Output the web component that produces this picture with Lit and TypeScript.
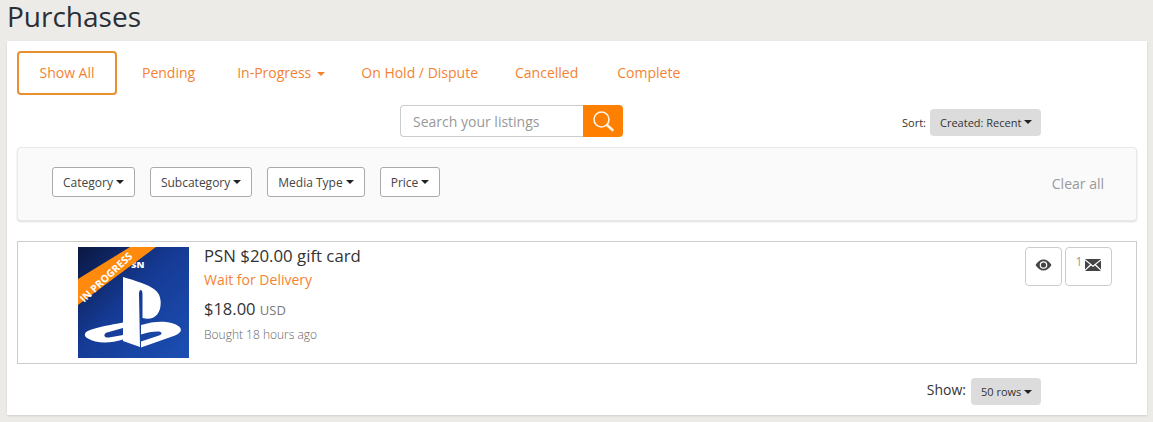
import { LitElement, html, css } from "lit";
import { customElement } from "lit/decorators.js";

const caret = html`<span class="caret"></span>`;

@customElement("app-root")
export class AppRoot extends LitElement {
  static styles = css`
    :host { display: block; height: 422px; background: #ecebe8; font-family: "Open Sans", sans-serif; color: #333; box-sizing: border-box; padding: 0 6px 0 7px; }
    h1 { margin: 0; height: 41px; font-size: 28px; font-weight: 400; line-height: 33px; color: #2a2f36; }
    .card { background: #fff; height: 374px; box-sizing: border-box; padding: 10px; box-shadow: 0 1px 2px rgba(0,0,0,.12); }
    .tabs { display: flex; align-items: center; height: 44px; font-size: 14px; color: #f58233; }
    .tab { white-space: nowrap; margin-top: -2px; }
    .tab.active { box-sizing: border-box; width: 100px; height: 44px; margin-top: 0; border: 2px solid #e88f30; border-radius: 4px; display: flex; align-items: center; justify-content: center; margin-right: 25px; padding-bottom: 2px; }
    .tab.p { margin-right: 42px; }
    .tab.ip { margin-right: 36px; }
    .tab.oh { margin-right: 37px; }
    .tab.cn { margin-right: 39px; }
    .caret { display: inline-block; width: 0; height: 0; margin-left: 3px; vertical-align: middle; border-top: 4px solid #222; border-left: 4px solid transparent; border-right: 4px solid transparent; }
    .tabs .caret { margin-left: 6px; border-top-color: currentColor; }
    .row { display: flex; align-items: center; height: 32px; margin-top: 10px; padding-left: 383px; padding-right: 96px; }
    .search { display: flex; width: 223px; height: 32px; }
    .search .input { flex: 1; box-sizing: border-box; border: 1px solid #ccc; border-right: 0; border-radius: 4px 0 0 4px; padding-left: 12px; font-size: 14px; line-height: 31px; color: #999; }
    .search .go { width: 40px; background: #ff8000; border-radius: 0 4px 4px 0; display: flex; align-items: center; justify-content: center; }
    .sort { margin-left: auto; display: flex; align-items: center; gap: 4px; font-size: 11px; color: #333; padding-top: 2px; }
    .grey { display: inline-flex; align-items: center; box-sizing: border-box; padding-left: 10px; background: #dcdcdc; border-radius: 4px; font-size: 11px; color: #333; height: 27px; white-space: nowrap; }
    .grey.s { width: 111px; }
    .grey.r { width: 70px; }
    .panel { box-sizing: border-box; height: 74px; margin-top: 10px; background: #fafafa; border: 1px solid #e8e8e8; border-radius: 4px; box-shadow: 0 1px 2px rgba(0,0,0,.14); display: flex; align-items: center; padding: 0 32px 4px 34px; gap: 15px; }
    .fb { box-sizing: border-box; height: 30px; padding: 0 10px; border: 1px solid #aaa; border-radius: 3px; background: #fff; font-size: 12px; color: #444; display: flex; align-items: center; white-space: nowrap; }
    .clear { margin-left: auto; font-size: 14px; color: #999; padding-top: 3px; }
    .item { box-sizing: border-box; height: 123px; margin-top: 20px; border: 1px solid #ccc; display: flex; padding: 5px 24px 0 60px; }
    .thumb { display: block; width: 111px; height: 111px; flex: none; overflow: visible; }
    .info { margin-left: 15px; flex: 1; }
    .title { font-size: 16.8px; line-height: 18px; color: #333; }
    .status { font-size: 14px; line-height: 20px; margin-top: 5px; color: #f58233; }
    .price { font-size: 16.5px; line-height: 22px; margin-top: 8px; color: #333; }
    .price small { font-size: 13px; color: #777; }
    .ago { font-size: 12px; font-weight: 300; line-height: 16px; margin-top: 6px; color: #666; }
    .acts { display: flex; gap: 3px; align-items: flex-start; }
    .act { box-sizing: border-box; height: 39px; border: 1px solid #ccc; border-radius: 4px; display: flex; align-items: center; justify-content: center; padding-bottom: 3px; }
    .act.e { width: 37px; }
    .act.m { width: 47px; }
    .act sup { font-size: 12px; color: #999; line-height: 1; margin-right: 3px; position: relative; top: -3px; }
    .foot { display: flex; align-items: center; justify-content: flex-end; gap: 5px; height: 27px; margin-top: 14px; padding-right: 96px; font-size: 14px; color: #333; }
    .foot .lbl { padding-bottom: 4px; }
  `;

  render() {
    return html`
      <h1>Purchases</h1>
      <div class="card">
        <div class="tabs">
          <div class="tab active">Show All</div>
          <div class="tab p">Pending</div>
          <div class="tab ip">In-Progress${caret}</div>
          <div class="tab oh">On Hold / Dispute</div>
          <div class="tab cn">Cancelled</div>
          <div class="tab">Complete</div>
        </div>
        <div class="row">
          <div class="search">
            <div class="input">Search your listings</div>
            <div class="go">
              <svg width="24" height="24" viewBox="0 0 24 24" fill="none" stroke="#fff3e6">
                <circle cx="10.500" cy="10.500" r="7.500" stroke-width="1.600"></circle>
                <path d="M16 16l5.500 5" stroke-width="2.600" stroke-linecap="round"></path>
              </svg>
            </div>
          </div>
          <div class="sort">Sort: <span class="grey s">Created: Recent${caret}</span></div>
        </div>
        <div class="panel">
          <div class="fb">Category${caret}</div>
          <div class="fb">Subcategory${caret}</div>
          <div class="fb">Media Type${caret}</div>
          <div class="fb">Price${caret}</div>
          <div class="clear">Clear all</div>
        </div>
        <div class="item">
          <svg class="thumb" viewBox="0 0 111 111">
            <defs>
              <linearGradient id="g" x1="0" y1="0" x2="1" y2="1">
                <stop offset="0" stop-color="#0a1740"></stop>
                <stop offset=".45" stop-color="#153a94"></stop>
                <stop offset="1" stop-color="#1c4fb4"></stop>
              </linearGradient>
            </defs>
            <rect width="111" height="111" fill="url(#g)"></rect>
            <text x="53" y="21" font-size="9.500" font-weight="800" fill="#fff" font-family="Open Sans">SN</text>
            <polygon points="0,58 0,32 52,0 78,0" fill="#ff8a0c"></polygon>
            <text transform="translate(6,56) rotate(-43)" font-size="10.300" font-weight="700" fill="#fff" font-family="Open Sans">IN PROGRESS</text>
            <path fill="#fff" d="M45 30 L45 94 L62 100 L61 47 C61 41.500 64.500 41.500 64.500 47 L64.500 71 C75 74 83 68 82.700 55 C82.500 42 72 38 45 30Z"></path>
            <path fill="#fff" d="M45 75.500 C32 78 20 80 12 83 C5 85.500 6 89.500 10 91.500 C18 96.500 32 96.500 45 92.500 L45 88 L31 90.500 C25.500 91 25 87 29 85.500 L45 81Z"></path>
            <path fill="#fff" d="M63 78 C72 75 82 74 88 75 C97 76 105 80 102.500 84.500 C101 86.500 99 87.500 97 88.500 L63 100.500 L63 94.500 L81 88.500 C85 87 84 84.500 80 84.500 C74 84.500 69 85.500 63 87.500Z"></path>
          </svg>
          <div class="info">
            <div class="title">PSN $20.00 gift card</div>
            <div class="status">Wait for Delivery</div>
            <div class="price">$18.00 <small>USD</small></div>
            <div class="ago">Bought 18 hours ago</div>
          </div>
          <div class="acts">
            <div class="act e">
              <svg width="17" height="12" viewBox="0 0 16 12">
                <path fill-rule="evenodd" fill="#444" d="M0 6C2 2.500 5 .5 8 .5S14 2.500 16 6c-2 3.500-5 5.500-8 5.500S2 9.500 0 6ZM8 2.200a3.800 3.800 0 1 0 0 7.600a3.800 3.800 0 0 0 0-7.600Z"></path>
                <circle cx="8" cy="6" r="2.600" fill="#444"></circle>
              </svg>
            </div>
            <div class="act m">
              <sup>1</sup>
              <svg width="16" height="12" viewBox="0 0 16 12">
                <path fill="#444" d="M0 0h16L8 6.500ZM0 1.500l5 4L0 10.500ZM16 1.500l-5 4 5 5ZM6 6.500l2 1.500 2-1.500 6 5.500H0Z"></path>
              </svg>
            </div>
          </div>
        </div>
        <div class="foot"><span class="lbl">Show:</span><span class="grey r">50 rows${caret}</span></div>
      </div>
    `;
  }
}
